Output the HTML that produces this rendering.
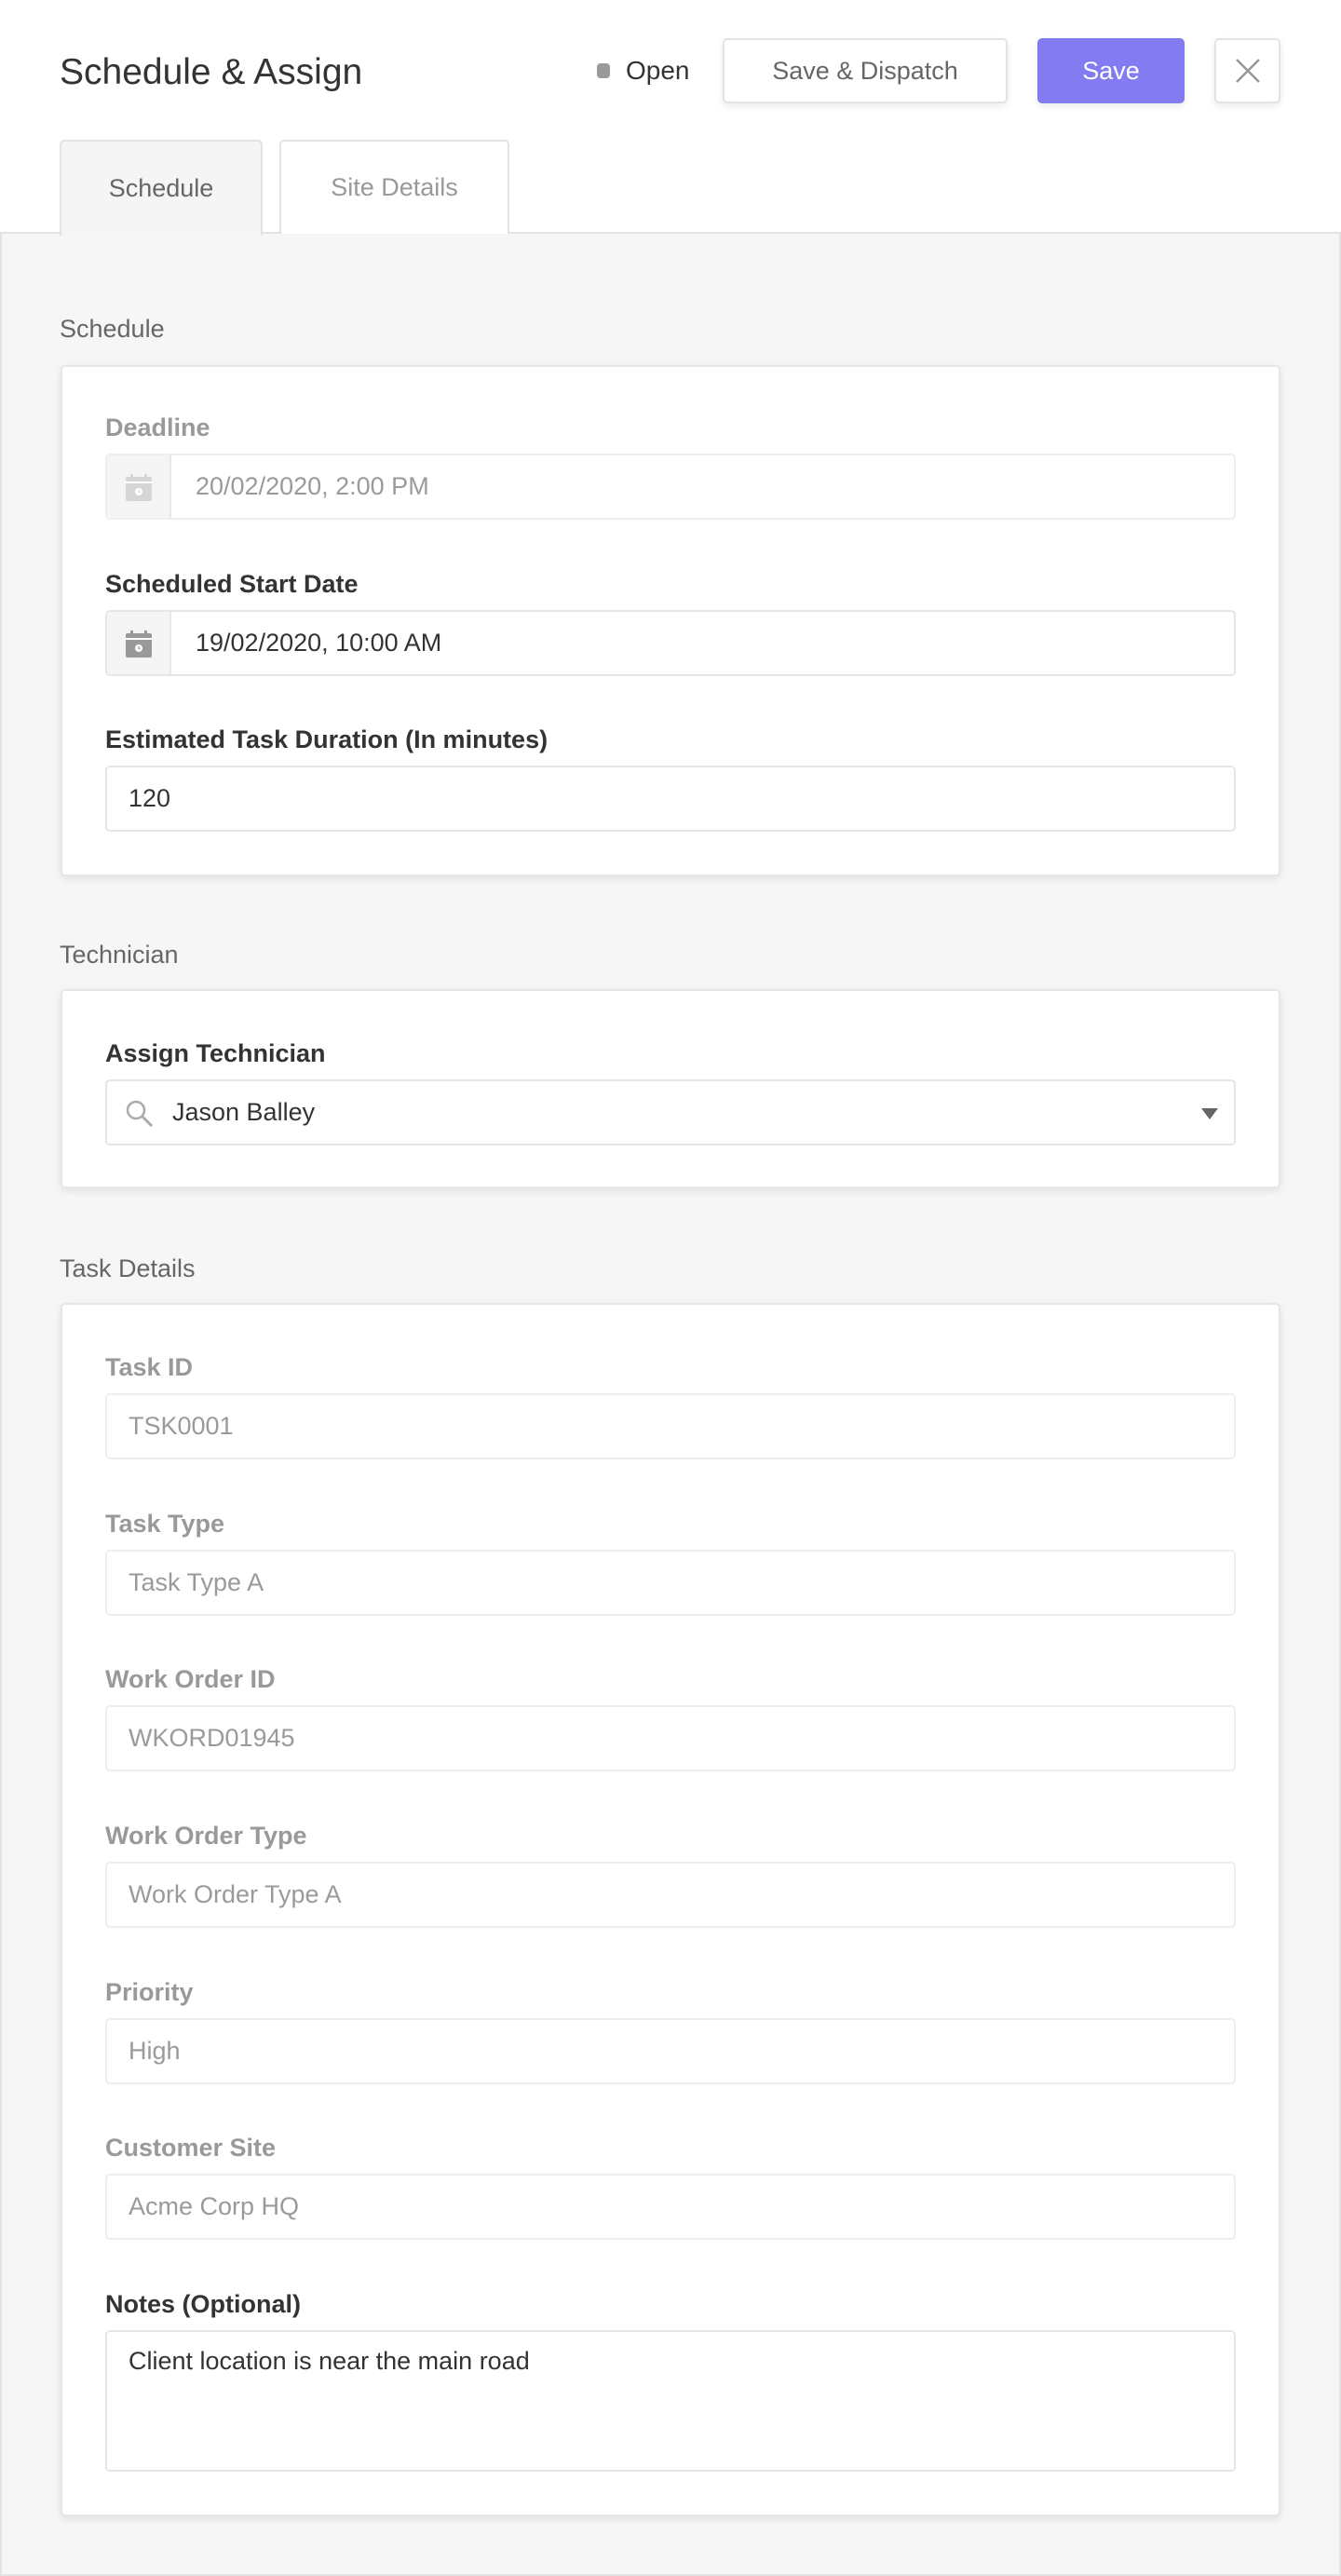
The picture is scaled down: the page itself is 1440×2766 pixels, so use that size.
<!DOCTYPE html>
<html><head><meta charset="utf-8"><style>
*{box-sizing:border-box;margin:0;padding:0}
body{width:1440px;height:2766px;background:#fff;font-family:"Liberation Sans",sans-serif;position:relative;overflow:hidden}
.a{position:absolute}
.title{left:64px;top:54px;font-size:39px;color:#333;line-height:48px}
.btn{position:absolute;top:41px;height:70px;border:2px solid #e3e3e3;border-radius:5px;background:#fff;box-shadow:0 3px 8px rgba(0,0,0,.08);font-size:27px;color:#666;display:flex;align-items:center;justify-content:center}
.panel{left:0;top:249px;width:1440px;height:2517px;background:#f6f6f6;border:2px solid #e3e3e3}
.tab{position:absolute;top:150px;height:101px;border:2px solid #e3e3e3;border-bottom:none;border-radius:5px 5px 0 0;font-size:27px;display:flex;align-items:center;justify-content:center}
.sec{position:absolute;left:64px;font-size:27px;color:#666;line-height:32px}
.card{position:absolute;left:65px;width:1310px;background:#fff;border:2px solid #e6e6e6;border-radius:5px;box-shadow:0 3px 8px rgba(0,0,0,.09)}
.lbl{position:absolute;left:113px;font-size:27px;line-height:32px;font-weight:bold;color:#333}
.lbl.d{color:#999}
.inp{position:absolute;left:113px;width:1214px;height:71px;border:2px solid #e6e6e6;border-radius:5px;background:#fff;font-size:27px;color:#333;display:flex;align-items:center;padding-left:23px}
.inp.d{border-color:#eeeeee;color:#9a9a9a}
.ico{position:absolute;left:0;top:0;bottom:0;width:69px;background:#f5f5f5;border-right:2px solid #e8e8e8;border-radius:4px 0 0 4px;display:flex;align-items:center;justify-content:center}
</style></head><body>
<div class="a title">Schedule &amp; Assign</div>
<div class="a" style="left:641px;top:68px;width:14px;height:16px;border-radius:4px;background:#999"></div>
<div class="a" style="left:672px;top:58px;font-size:28px;color:#333;line-height:36px">Open</div>
<div class="btn" style="left:776px;width:306px">Save &amp; Dispatch</div>
<div class="btn" style="left:1114px;width:158px;background:#827bf1;border-color:#827bf1;color:#fff">Save</div>
<div class="btn" style="left:1304px;width:71px"><svg width="30" height="30" viewBox="0 0 30 30"><path d="M3 3L27 27M27 3L3 27" stroke="#999" stroke-width="2.5"/></svg></div>

<div class="a panel"></div>
<div class="tab" style="left:64px;width:218px;background:#f5f5f5;height:103px;color:#666">Schedule</div>
<div class="tab" style="left:300px;width:247px;background:#fff;color:#999">Site Details</div>

<div class="sec" style="top:337px">Schedule</div>
<div class="card" style="top:392px;height:549px"></div>
<div class="lbl d" style="top:443px">Deadline</div>
<div class="inp d" style="top:487px;padding-left:95px"><div class="ico"><svg width="34" height="34" viewBox="0 0 34 34"><rect x="8" y="3" width="3" height="6" fill="#d6d6d6"/><rect x="23" y="3" width="3" height="6" fill="#d6d6d6"/><rect x="3" y="6" width="28" height="26" rx="2" fill="#d6d6d6"/><rect x="3" y="11" width="28" height="2" fill="#fff"/><circle cx="17" cy="22" r="4" fill="#fff"/><path d="M17 20v2.5h1.5" stroke="#d6d6d6" stroke-width="1.2" fill="none"/></svg></div>20/02/2020, 2:00 PM</div>
<div class="lbl" style="top:611px">Scheduled Start Date</div>
<div class="inp" style="top:655px;padding-left:95px"><div class="ico"><svg width="34" height="34" viewBox="0 0 34 34"><rect x="8" y="3" width="3" height="6" fill="#999"/><rect x="23" y="3" width="3" height="6" fill="#999"/><rect x="3" y="6" width="28" height="26" rx="2" fill="#999"/><rect x="3" y="11" width="28" height="2" fill="#fff"/><circle cx="17" cy="22" r="4" fill="#fff"/><path d="M17 20v2.5h1.5" stroke="#999" stroke-width="1.2" fill="none"/></svg></div>19/02/2020, 10:00 AM</div>
<div class="lbl" style="top:778px">Estimated Task Duration (In minutes)</div>
<div class="inp" style="top:822px">120</div>

<div class="sec" style="top:1009px">Technician</div>
<div class="card" style="top:1062px;height:214px"></div>
<div class="lbl" style="top:1115px">Assign Technician</div>
<div class="inp" style="top:1159px;padding-left:70px"><svg class="a" style="left:18px;top:18px" width="34" height="34" viewBox="0 0 34 34"><circle cx="13" cy="13" r="9" stroke="#aaa" stroke-width="2.5" fill="none"/><path d="M19.5 19.5L30 30" stroke="#aaa" stroke-width="3"/></svg>Jason Balley<svg class="a" style="left:1175px;top:29px" width="18" height="12" viewBox="0 0 18 12"><path d="M0 0H18L9 12Z" fill="#666"/></svg></div>

<div class="sec" style="top:1346px">Task Details</div>
<div class="card" style="top:1399px;height:1303px"></div>
<div class="lbl d" style="top:1452px">Task ID</div>
<div class="inp d" style="top:1496px">TSK0001</div>
<div class="lbl d" style="top:1620px">Task Type</div>
<div class="inp d" style="top:1664px">Task Type A</div>
<div class="lbl d" style="top:1787px">Work Order ID</div>
<div class="inp d" style="top:1831px">WKORD01945</div>
<div class="lbl d" style="top:1955px">Work Order Type</div>
<div class="inp d" style="top:1999px">Work Order Type A</div>
<div class="lbl d" style="top:2123px">Priority</div>
<div class="inp d" style="top:2167px">High</div>
<div class="lbl d" style="top:2290px">Customer Site</div>
<div class="inp d" style="top:2334px">Acme Corp HQ</div>
<div class="lbl" style="top:2458px">Notes (Optional)</div>
<div class="inp" style="top:2502px;height:152px;align-items:flex-start;padding-top:16px">Client location is near the main road</div>
</body></html>
